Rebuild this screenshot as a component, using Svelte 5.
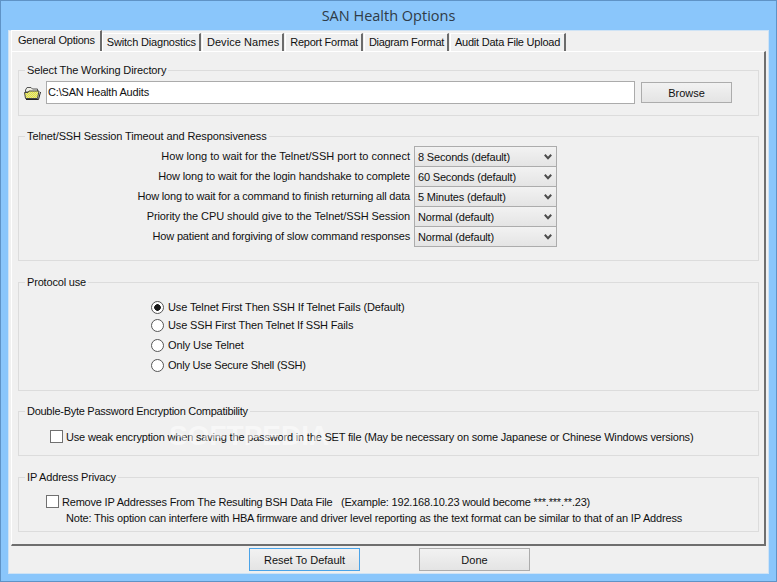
<script>
  // letter spacing per string: the original is a bitmap font, its widths don't scale evenly
  const tabs = [
    { label: "General Options", sp: -0.22 },
    { label: "Switch Diagnostics", sp: -0.18 },
    { label: "Device Names", sp: 0.07 },
    { label: "Report Format", sp: -0.25 },
    { label: "Diagram Format", sp: -0.32 },
    { label: "Audit Data File Upload", sp: -0.22 }
  ];
  const timeouts = [
    { label: "How long to wait for the Telnet/SSH port to connect", sp: 0, value: "8 Seconds (default)" },
    { label: "How long to wait for the login handshake to complete", sp: -0.12, value: "60 Seconds (default)" },
    { label: "How long to wait for a command to finish returning all data", sp: -0.18, value: "5 Minutes (default)" },
    { label: "Priority the CPU should give to the Telnet/SSH Session", sp: -0.09, value: "Normal (default)" },
    { label: "How patient and forgiving of slow command responses", sp: -0.18, value: "Normal (default)" }
  ];
  const protocols = [
    { label: "Use Telnet First Then SSH If Telnet Fails (Default)", on: true, sp: -0.12 },
    { label: "Use SSH First Then Telnet If SSH Fails", on: false, sp: -0.15 },
    { label: "Only Use Telnet", on: false, sp: -0.12 },
    { label: "Only Use Secure Shell (SSH)", on: false, sp: -0.22 }
  ];
</script>

<div class="window">
  <div class="title">SAN Health Options</div>
  <div class="client">
    <div class="tabs">
      {#each tabs as tab, i}
        <div class="tab" class:active={i === 0} style="letter-spacing: {tab.sp}px">{tab.label}</div>
      {/each}
    </div>
    <div class="panel">
      <fieldset class="g1">
        <legend>Select The Working Directory</legend>
        <div class="dir">
          <svg class="folder" width="17" height="13" viewBox="0 0 17 13">
            <defs>
              <pattern id="dither" width="2" height="2" patternUnits="userSpaceOnUse">
                <rect width="2" height="2" fill="#eeee20" />
                <rect width="1" height="1" fill="#d8d8b0" />
                <rect x="1" y="1" width="1" height="1" fill="#d8d8b0" />
              </pattern>
            </defs>
            <path d="M1.5 3 L3 0.5 H7 L8.5 2 H13.5 V5 H1.5 Z" fill="#efefe6" stroke="#555" />
            <path d="M0.5 5.5 H4 L5 4 H15 L13.5 11.5 H1.5 Z" fill="url(#dither)" stroke="#444" />
            <path d="M2 12.5 H14.5 L16.5 5" fill="none" stroke="#222" />
          </svg>
          <div class="path">C:\SAN Health Audits</div>
          <div class="btn browse">Browse</div>
        </div>
      </fieldset>

      <fieldset class="g2">
        <legend>Telnet/SSH Session Timeout and Responsiveness</legend>
        <div class="rows">
          {#each timeouts as row}
            <div class="row-label" style="letter-spacing: {row.sp}px">{row.label}</div>
            <div class="combo">
              <span>{row.value}</span>
              <svg width="8" height="6" viewBox="0 0 8 6"><path d="M0.8 0.8 L4 4.2 L7.2 0.8" fill="none" stroke="#4c4c4c" stroke-width="2" /></svg>
            </div>
          {/each}
        </div>
      </fieldset>

      <fieldset class="g3">
        <legend>Protocol use</legend>
        <div class="radios">
          {#each protocols as p}
            <div class="radio-row" style="letter-spacing: {p.sp}px">
              <span class="radio" class:on={p.on}></span>
              {p.label}
            </div>
          {/each}
        </div>
      </fieldset>

      <fieldset class="g4">
        <legend>Double-Byte Password Encryption Compatibility</legend>
        <div class="check-row weak">
          <span class="check"></span>
          Use weak encryption when saving the password in the SET file (May be necessary on some Japanese or Chinese Windows versions)
        </div>
      </fieldset>

      <fieldset class="g5">
        <legend>IP Address Privacy</legend>
        <div class="check-row privacy">
          <span class="check"></span>
          <span class="pre">Remove IP Addresses From The Resulting BSH Data File   (Example: 192.168.10.23 would become ***.***.**.23)</span>
        </div>
        <div class="note">Note: This option can interfere with HBA firmware and driver level reporting as the text format can be similar to that of an IP Address</div>
      </fieldset>
      <div class="mark">SOFTPEDIA</div>
    </div>
    <div class="footer">
      <div class="btn reset">Reset To Default</div>
      <div class="btn done">Done</div>
    </div>
  </div>
</div>

<style>
  :global(body) {
    margin: 0;
    background: #8ac6fb;
  }
  .window {
    box-sizing: border-box;
    width: 777px;
    height: 582px;
    padding: 0 7px 7px;
    background: #8ac6fb;
    border: 1px solid #5f93c6;
    display: flex;
    flex-direction: column;
    font-family: "Liberation Sans", sans-serif;
    font-size: 11px;
    letter-spacing: -0.18px;
    color: #111;
  }
  .title {
    height: 29px;
    line-height: 30px;
    text-align: center;
    font-family: "Open Sans", sans-serif;
    font-size: 14.5px;
    letter-spacing: 0;
    color: #2f3b47;
  }
  .client {
    flex: 1;
    position: relative;
    background: #f0f0f0;
    border: 1px solid #cfe3f5;
    display: flex;
    flex-direction: column;
    padding: 0 2px;
  }
  .tabs {
    display: flex;
    height: 20px;
    position: relative;
    z-index: 1;
    align-items: flex-end;
  }
  .tab {
    height: 17px;
    line-height: 17px;
    padding: 0 3px 0 4px;
    margin-left: 1px;
    background: #f0f0f0;
    border-left: 1px solid #fff;
    border-top: 1px solid #fff;
    border-right: 2px solid #6b6b6b;
    white-space: nowrap;
  }
  .tab:nth-child(2) {
    margin-left: 0;
  }
  .tab:last-child {
    padding-right: 4px;
  }
  .tab.active {
    height: 20px;
    line-height: 18px;
    padding: 0 5px 0 6px;
    margin-left: 0;
  }
  .panel {
    position: relative;
    box-sizing: border-box;
    height: 495px;
    padding: 0 5px 0 6px;
    border-left: 1px solid #fff;
    border-top: 1px solid #fff;
    border-right: 2px solid #6e6e6e;
    border-bottom: 2px solid #6e6e6e;
  }
  fieldset {
    box-sizing: border-box;
    margin: 0;
    padding: 0;
    min-width: 0;
    border: 1px solid #dcdcdc;
  }
  legend {
    margin-left: 6px;
    padding: 0 2px;
    font-size: 11px;
    line-height: 13px;
  }
  .g1 { margin-top: 12px; height: 52px; }
  .g2 { margin-top: 14px; height: 131px; }
  .g3 { margin-top: 15px; height: 115px; }
  .g4 { margin-top: 14px; height: 51px; }
  .g5 { margin-top: 15px; height: 61px; }
  .g1 legend { letter-spacing: -0.12px; }
  .g2 legend { letter-spacing: -0.11px; }
  .g4 legend { letter-spacing: -0.27px; }
  .dir {
    display: flex;
    align-items: center;
    padding: 4px 0 0 5px;
    height: 23px;
  }
  .folder {
    margin-right: 5px;
    margin-top: 1px;
  }
  .path {
    box-sizing: border-box;
    width: 589px;
    height: 23px;
    line-height: 20px;
    padding-left: 1px;
    background: #fff;
    border: 1px solid #ababab;
  }
  .btn {
    box-sizing: border-box;
    text-align: center;
    letter-spacing: 0;
    background: linear-gradient(#f2f2f2, #e4e4e4);
    border: 1px solid #acacac;
  }
  .browse {
    width: 91px;
    height: 21px;
    line-height: 20px;
    margin-left: 6px;
  }
  .rows {
    display: grid;
    grid-template-columns: 391px 143px;
    column-gap: 4px;
    margin-top: 3px;
    grid-auto-rows: 20px;
  }
  .row-label {
    text-align: right;
    line-height: 20px;
    white-space: nowrap;
  }
  .combo {
    box-sizing: border-box;
    display: flex;
    align-items: center;
    justify-content: space-between;
    height: 21px;
    padding: 0 4px 0 3px;
    background: linear-gradient(#f2f2f2, #e4e4e4);
    border: 1px solid #acacac;
  }
  .radios {
    display: flex;
    flex-direction: column;
    padding: 8px 0 0 132px;
  }
  .radio-row {
    display: flex;
    align-items: center;
    gap: 4px;
    height: 20px;
    white-space: nowrap;
  }
  .radio-row:nth-child(2) {
    margin-top: -2px;
  }
  .radio {
    box-sizing: border-box;
    display: inline-block;
    width: 13px;
    height: 13px;
    border: 1px solid #555;
    border-radius: 50%;
    background: #fff;
  }
  .radio.on {
    background: radial-gradient(circle, #1a1a1a 0 3px, #fff 3.6px);
  }
  .check-row {
    display: flex;
    align-items: center;
    gap: 3px;
    white-space: nowrap;
  }
  .weak {
    padding: 12px 0 0 31px;
  }
  .privacy {
    padding: 11px 0 0 27px;
    letter-spacing: -0.2px;
  }
  .pre {
    white-space: pre;
  }
  .check {
    box-sizing: border-box;
    width: 13px;
    height: 13px;
    background: #fff;
    border: 1px solid #707070;
  }
  .note {
    padding: 4px 0 0 47px;
    white-space: nowrap;
  }
  .mark {
    position: absolute;
    left: 157px;
    top: 368px;
    font-weight: bold;
    font-size: 28px;
    letter-spacing: 0;
    color: rgba(255, 255, 255, 0.5);
    pointer-events: none;
  }
  .footer {
    display: flex;
    padding: 2px 0 0 238px;
    gap: 59px;
  }
  .reset, .done {
    width: 111px;
    height: 23px;
    line-height: 22px;
  }
  .reset {
    border-color: #4aa3e8;
  }
</style>
